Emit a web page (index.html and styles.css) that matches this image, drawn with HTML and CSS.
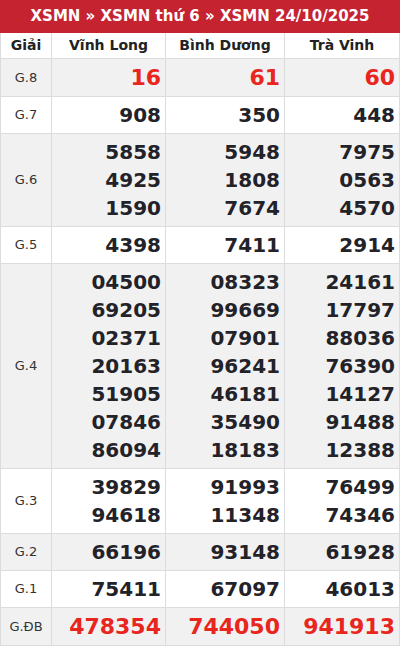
FILE: index.html
```html
<!DOCTYPE html>
<html lang="vi">
<head>
<meta charset="utf-8">
<link rel="stylesheet" href="styles.css">
</head>
<body>
<div class="box">
  <div class="title">XSMN » XSMN thứ 6 » XSMN 24/10/2025</div>
  <table class="kq">
    <colgroup><col class="c0"><col class="c1"><col class="c2"><col class="c3"></colgroup>
    <thead>
      <tr><th>Giải</th><th>Vĩnh Long</th><th>Bình Dương</th><th>Trà Vinh</th></tr>
    </thead>
    <tbody>
      <tr class="alt"><td class="lb">G.8</td><td class="red">16</td><td class="red">61</td><td class="red">60</td></tr>
      <tr><td class="lb">G.7</td><td>908</td><td>350</td><td>448</td></tr>
      <tr class="alt"><td class="lb">G.6</td>
        <td><div>5858</div><div>4925</div><div>1590</div></td>
        <td><div>5948</div><div>1808</div><div>7674</div></td>
        <td><div>7975</div><div>0563</div><div>4570</div></td></tr>
      <tr><td class="lb">G.5</td><td>4398</td><td>7411</td><td>2914</td></tr>
      <tr class="alt"><td class="lb">G.4</td>
        <td><div>04500</div><div>69205</div><div>02371</div><div>20163</div><div>51905</div><div>07846</div><div>86094</div></td>
        <td><div>08323</div><div>99669</div><div>07901</div><div>96241</div><div>46181</div><div>35490</div><div>18183</div></td>
        <td><div>24161</div><div>17797</div><div>88036</div><div>76390</div><div>14127</div><div>91488</div><div>12388</div></td></tr>
      <tr><td class="lb">G.3</td>
        <td><div>39829</div><div>94618</div></td>
        <td><div>91993</div><div>11348</div></td>
        <td><div>76499</div><div>74346</div></td></tr>
      <tr class="alt"><td class="lb">G.2</td><td>66196</td><td>93148</td><td>61928</td></tr>
      <tr><td class="lb">G.1</td><td>75411</td><td>67097</td><td>46013</td></tr>
      <tr class="alt"><td class="lb">G.ĐB</td><td class="red">478354</td><td class="red">744050</td><td class="red">941913</td></tr>
    </tbody>
  </table>
</div>
</body>
</html>
```
FILE: styles.css
```css
* { box-sizing: border-box; }
html, body { margin: 0; padding: 0; background: #fff; }
body { font-family: "DejaVu Sans", sans-serif; }
.box { width: 399px; }
.title {
  background: #c62331;
  color: #fff;
  font-weight: bold;
  font-size: 15px;
  height: 33px;
  line-height: 33px;
  text-align: center;
  width: 400px;
}
.kq {
  width: 399px;
  border-collapse: collapse;
  table-layout: fixed;
  border: 1px solid #dcdcdf;
  border-top: none;
}
.c0 { width: 51px; }
.c1 { width: 114px; }
.c2 { width: 119px; }
.c3 { width: 115px; }
.kq th {
  font-size: 14px;
  font-weight: bold;
  color: #222;
  line-height: 17px;
  padding: 4px 0;
  text-align: center;
  border: 1px solid #dcdcdf;
  border-top: none;
}
.kq td {
  border: 1px solid #dcdcdf;
  padding: 4px 4px 4px 0;
  text-align: right;
  font-size: 20px;
  font-weight: bold;
  line-height: 28px;
  color: #222228;
  vertical-align: middle;
}
.kq td.lb {
  text-align: center;
  font-size: 13px;
  font-weight: normal;
  color: #333;
  padding: 0;
}
.kq tr.alt td { background: #f1f1f2; }
.kq td.red { color: #e8261d; font-size: 22px; line-height: 29px; }
```
